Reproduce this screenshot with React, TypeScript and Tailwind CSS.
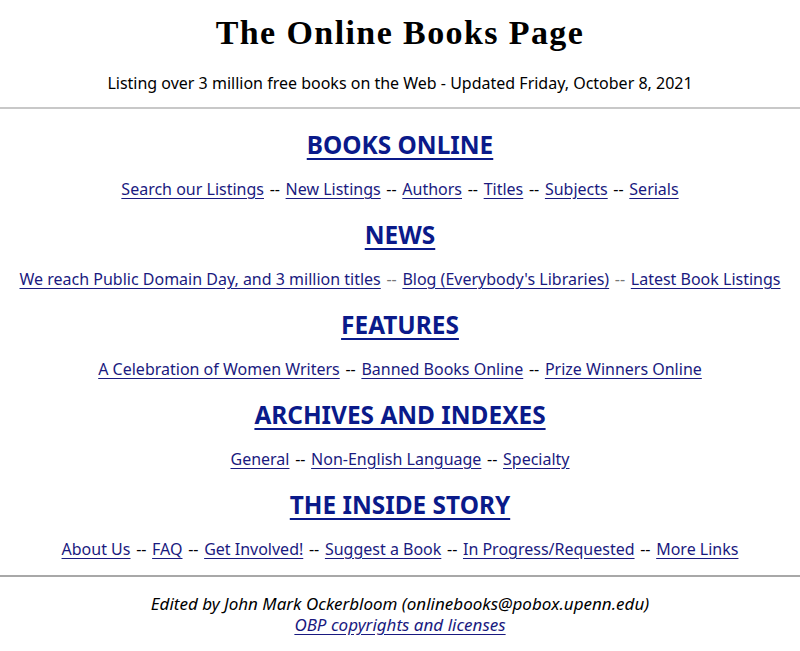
import React from "react";

const sans = { fontFamily: '"Noto Sans", "Open Sans", sans-serif' };

function L({ children }: { children: React.ReactNode }) {
  return <a href="#" className="text-[#1a1a80] underline underline-offset-[3px]">{children}</a>;
}

function Row({ items, sepClass = "text-black" }: { items: string[]; sepClass?: string }) {
  return (
    <div className="leading-[45px] h-[45px] text-[16px] text-center whitespace-nowrap">
      {items.map((t, i) => (
        <React.Fragment key={i}>
          {i > 0 && <span className={sepClass + " px-[1.5px]"}> -- </span>}
          <L>{t}</L>
        </React.Fragment>
      ))}
    </div>
  );
}

function H({ children }: { children: React.ReactNode }) {
  return (
    <div className="leading-[45px] h-[45px] text-center">
      <a href="#" className="text-[24.4px] font-bold text-[#0a1a8a] underline underline-offset-[4px]">{children}</a>
    </div>
  );
}

export default function App() {
  return (
    <div className="w-[800px] h-[651px] bg-white text-black overflow-hidden" style={sans}>
      <div
        className="mt-[13px] leading-[40px] text-center text-[34px] font-bold tracking-[1.4px]"
        style={{ fontFamily: '"Liberation Serif", serif' }}
      >
        The Online Books Page
      </div>
      <div className="mt-[18px] leading-[24px] text-center text-[16px]">
        Listing over 3 million free books on the Web - Updated Friday, October 8, 2021
      </div>
      <div className="mt-[12px] h-[2px] bg-[#c8c8c8]" />
      <div className="mt-[13px]">
        <H>BOOKS ONLINE</H>
        <Row items={["Search our Listings", "New Listings", "Authors", "Titles", "Subjects", "Serials"]} />
        <H>NEWS</H>
        <Row
          items={["We reach Public Domain Day, and 3 million titles", "Blog (Everybody's Libraries)", "Latest Book Listings"]}
          sepClass="text-[#777]"
        />
        <H>FEATURES</H>
        <Row items={["A Celebration of Women Writers", "Banned Books Online", "Prize Winners Online"]} />
        <H>ARCHIVES AND INDEXES</H>
        <Row items={["General", "Non-English Language", "Specialty"]} />
        <H>THE INSIDE STORY</H>
        <Row items={["About Us", "FAQ", "Get Involved!", "Suggest a Book", "In Progress/Requested", "More Links"]} />
      </div>
      <div className="mt-[3px] h-[2px] bg-[#a8a8a8]" />
      <div className="mt-[16px] text-center text-[17px] italic leading-[21px]">
        Edited by John Mark Ockerbloom (onlinebooks@pobox.upenn.edu)
      </div>
      <div className="text-center text-[17px] italic leading-[21px]">
        <L>OBP copyrights and licenses</L>
      </div>
    </div>
  );
}
